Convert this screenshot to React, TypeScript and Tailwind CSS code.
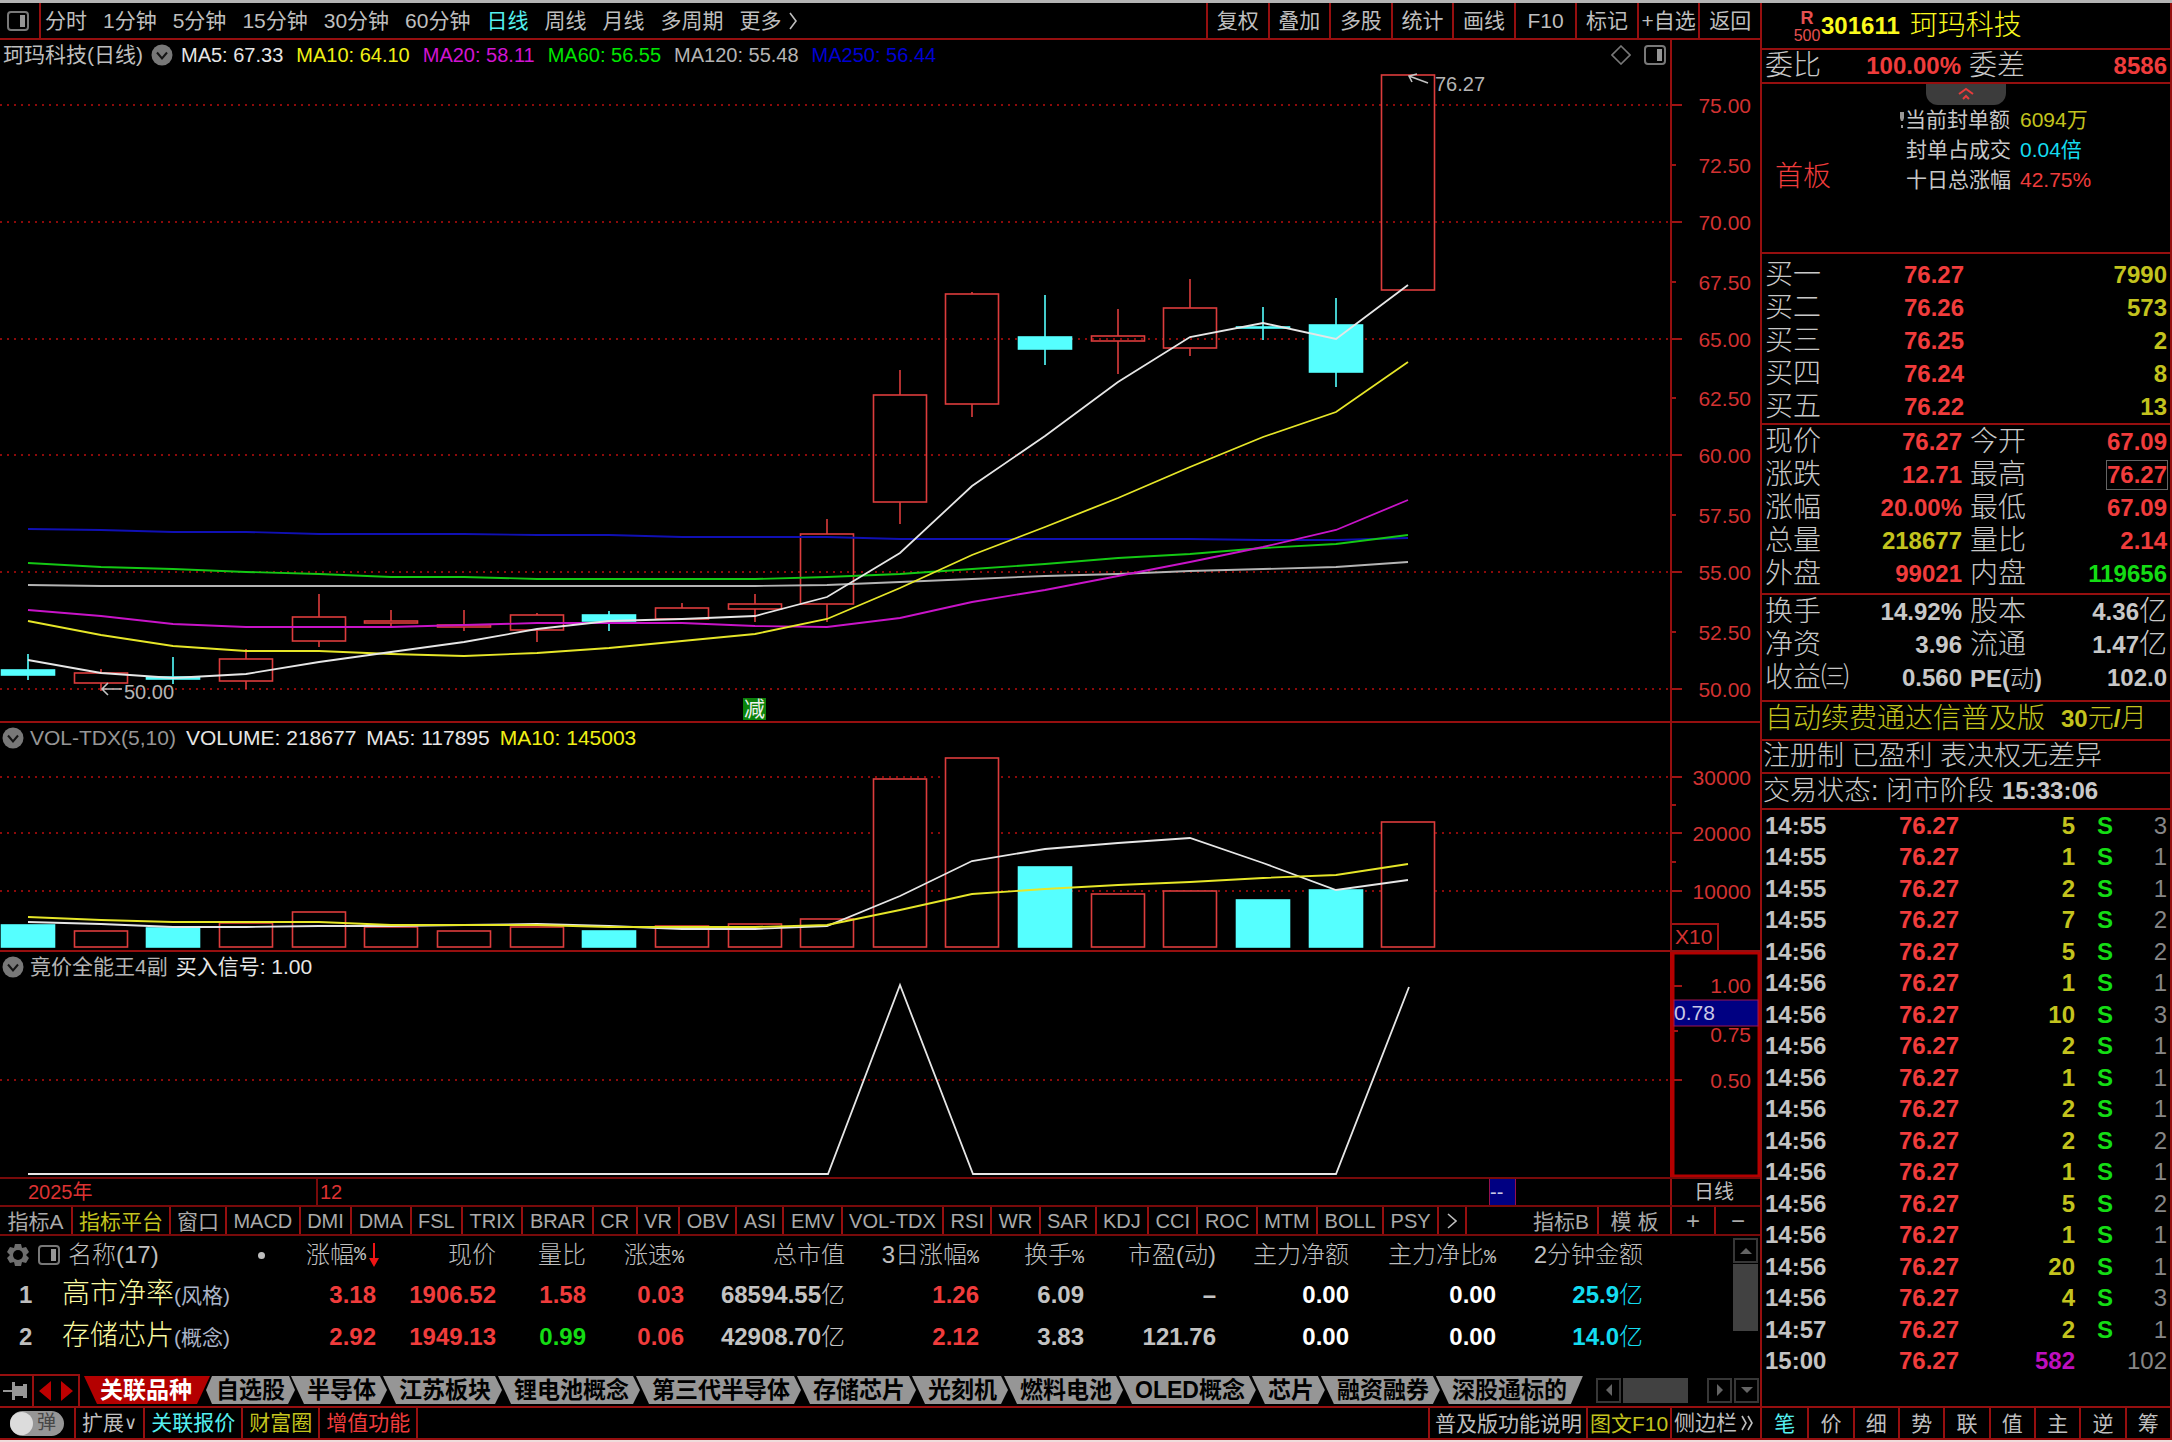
import React, { useState } from "react";
import clsx from "clsx";

const periods = [
  "分时",
  "1分钟",
  "5分钟",
  "15分钟",
  "30分钟",
  "60分钟",
  "日线",
  "周线",
  "月线",
  "多周期",
];

const tools = ["复权", "叠加", "多股", "统计", "画线", "F10", "标记", "+自选", "返回"];

const maLegend = [
  { text: "MA5: 67.33", color: "text-[#e6e6e6]" },
  { text: "MA10: 64.10", color: "text-[#f0f014]" },
  { text: "MA20: 58.11", color: "text-[#d214d2]" },
  { text: "MA60: 56.55", color: "text-[#00e600]" },
  { text: "MA120: 55.48", color: "text-[#b4b4b4]" },
  { text: "MA250: 56.44", color: "text-[#0000d2]" },
];

const indicators = [
  "MACD",
  "DMI",
  "DMA",
  "FSL",
  "TRIX",
  "BRAR",
  "CR",
  "VR",
  "OBV",
  "ASI",
  "EMV",
  "VOL-TDX",
  "RSI",
  "WR",
  "SAR",
  "KDJ",
  "CCI",
  "ROC",
  "MTM",
  "BOLL",
  "PSY",
];

const sectors = [
  "半导体",
  "江苏板块",
  "锂电池概念",
  "第三代半导体",
  "存储芯片",
  "光刻机",
  "燃料电池",
  "OLED概念",
  "芯片",
  "融资融券",
];

const sideTabs = ["笔", "价", "细", "势", "联", "值", "主", "逆", "筹"];

// x position of each trading day
const dayX = (i: number) => Math.round(28 + 72.65 * i);

type Candle = {
  top: number;
  bottom: number;
  high: number;
  low: number;
  vol: number;
  down?: boolean;
};

const candles: Candle[] = [
  { top: 670, bottom: 675, high: 654, low: 680, vol: 925, down: true },
  { top: 673, bottom: 683, high: 669, low: 691, vol: 931 },
  { top: 677, bottom: 679, high: 657, low: 684, vol: 928, down: true },
  { top: 659, bottom: 681, high: 649, low: 689, vol: 923 },
  { top: 617, bottom: 641, high: 594, low: 647, vol: 912 },
  { top: 621, bottom: 623, high: 610, low: 626, vol: 927 },
  { top: 625, bottom: 627, high: 610, low: 631, vol: 931 },
  { top: 615, bottom: 630, high: 613, low: 642, vol: 927 },
  { top: 615, bottom: 621, high: 611, low: 631, vol: 931, down: true },
  { top: 608, bottom: 619, high: 603, low: 619, vol: 926 },
  { top: 604, bottom: 609, high: 594, low: 622, vol: 924 },
  { top: 534, bottom: 604, high: 519, low: 622, vol: 919 },
  { top: 395, bottom: 502, high: 370, low: 524, vol: 779 },
  { top: 294, bottom: 404, high: 292, low: 417, vol: 758 },
  { top: 337, bottom: 349, high: 295, low: 365, vol: 867, down: true },
  { top: 336, bottom: 341, high: 309, low: 374, vol: 894 },
  { top: 308, bottom: 348, high: 279, low: 356, vol: 891 },
  { top: 327, bottom: 328, high: 307, low: 340, vol: 900, down: true },
  { top: 325, bottom: 372, high: 298, low: 387, vol: 890, down: true },
  { top: 75, bottom: 290, high: 75, low: 290, vol: 822 },
];

const priceLines = [
  {
    color: "#1010b4",
    ys: [529, 530, 532, 532, 534, 534, 534, 535, 535, 537, 537, 537, 539, 539, 539, 539, 539, 540, 540, 538],
  },
  {
    color: "#b4b4b4",
    ys: [585, 586, 586, 586, 586, 586, 586, 586, 586, 586, 586, 585, 582, 579, 576, 574, 571, 569, 567, 562],
  },
  {
    color: "#14c814",
    ys: [563, 567, 569, 572, 574, 577, 577, 579, 579, 579, 579, 577, 574, 569, 564, 558, 554, 548, 544, 535],
  },
  {
    color: "#c814c8",
    ys: [610, 616, 624, 627, 627, 627, 625, 623, 623, 623, 626, 627, 618, 602, 590, 576, 562, 547, 530, 500],
  },
  {
    color: "#e6e628",
    ys: [621, 635, 646, 651, 651, 654, 656, 653, 648, 641, 634, 619, 588, 555, 527, 498, 467, 437, 412, 362],
  },
  {
    color: "#e6e6e6",
    ys: [660, 673, 678, 674, 662, 652, 642, 629, 621, 619, 616, 597, 553, 486, 436, 382, 337, 323, 339, 285],
  },
];

const volumeLines = [
  {
    color: "#e6e6e6",
    ys: [922, 924, 927, 927, 926, 926, 925, 924, 926, 929, 929, 926, 896, 861, 849, 843, 838, 863, 890, 880],
  },
  {
    color: "#e6e628",
    ys: [917, 920, 922, 922, 922, 925, 925, 925, 927, 927, 927, 925, 910, 894, 889, 885, 882, 878, 875, 864],
  },
];

const toPoints = (ys: number[]) => ys.map((y, i) => `${dayX(i)},${y}`).join(" ");

const priceAxis = [
  { label: "75.00", y: 105 },
  { label: "72.50", y: 165, minor: true },
  { label: "70.00", y: 222 },
  { label: "67.50", y: 282, minor: true },
  { label: "65.00", y: 339 },
  { label: "62.50", y: 398, minor: true },
  { label: "60.00", y: 455 },
  { label: "57.50", y: 515, minor: true },
  { label: "55.00", y: 572 },
  { label: "52.50", y: 632, minor: true },
  { label: "50.00", y: 689 },
];

const volumeAxis = [
  { label: "30000", y: 777 },
  { label: "20000", y: 833 },
  { label: "10000", y: 891 },
];

const bids = [
  ["买一", "76.27", "7990"],
  ["买二", "76.26", "573"],
  ["买三", "76.25", "2"],
  ["买四", "76.24", "8"],
  ["买五", "76.22", "13"],
];

const red = "text-[#f03c3c]";
const yellow = "text-[#c3c31e]";
const gray = "text-[#c3c3c3]";
const green = "text-[#14dc14]";

const quotes = [
  ["现价", "76.27", red, "今开", "67.09", red],
  ["涨跌", "12.71", red, "最高", "76.27", red],
  ["涨幅", "20.00%", red, "最低", "67.09", red],
  ["总量", "218677", yellow, "量比", "2.14", red],
  ["外盘", "99021", red, "内盘", "119656", green],
];

const finance = [
  ["换手", "14.92%", "股本", "4.36", "亿"],
  ["净资", "3.96", "流通", "1.47", "亿"],
  ["收益㈢", "0.560", "PE(动)", "102.0", ""],
];

const trades = [
  ["14:55", "5", "S", "3"],
  ["14:55", "1", "S", "1"],
  ["14:55", "2", "S", "1"],
  ["14:55", "7", "S", "2"],
  ["14:56", "5", "S", "2"],
  ["14:56", "1", "S", "1"],
  ["14:56", "10", "S", "3"],
  ["14:56", "2", "S", "1"],
  ["14:56", "1", "S", "1"],
  ["14:56", "2", "S", "1"],
  ["14:56", "2", "S", "2"],
  ["14:56", "1", "S", "1"],
  ["14:56", "5", "S", "2"],
  ["14:56", "1", "S", "1"],
  ["14:56", "20", "S", "1"],
  ["14:56", "4", "S", "3"],
  ["14:57", "2", "S", "1"],
  ["15:00", "582", "", "102"],
];

const columns = [
  { name: "现价", width: "w-[120px]" },
  { name: "量比", width: "w-[90px]" },
  { name: "涨速", percent: true, width: "w-[98px]" },
  { name: "总市值", width: "w-[161px]" },
  { name: "3日涨幅", percent: true, width: "w-[134px]" },
  { name: "换手", percent: true, width: "w-[105px]" },
  { name: "市盈(动)", width: "w-[132px]" },
  { name: "主力净额", width: "w-[133px]" },
  { name: "主力净比", percent: true, width: "w-[147px]" },
  { name: "2分钟金额", width: "w-[147px]" },
];

const boards = [
  {
    name: "高市净率",
    kind: "(风格)",
    cells: ["3.18", "1906.52", "1.58", "0.03", "68594.55", "1.26", "6.09", "–", "0.00", "0.00", "25.9"],
  },
  {
    name: "存储芯片",
    kind: "(概念)",
    cells: ["2.92", "1949.13", "0.99", "0.06", "42908.70", "2.12", "3.83", "121.76", "0.00", "0.00", "14.0"],
  },
];

const cellColor = (row: number, col: number) => {
  if (row === 1 && col === 2) return green;
  if (col <= 3 || col === 5) return red;
  if (col === 8 || col === 9) return "text-white";
  if (col === 10) return "text-[#14dcf0]";
  return gray;
};

const PanelIcon = ({ className }: { className?: string }) => (
  <svg viewBox="0 0 22 20" className={clsx("h-5 w-[22px] shrink-0", className)} fill="none">
    <rect x="1" y="1" width="20" height="18" rx="3" stroke="#787878" strokeWidth="2" />
    <rect x="13" y="4" width="5" height="12" fill="#969696" />
  </svg>
);

const DropIcon = () => (
  <svg viewBox="0 0 22 22" className="size-[22px] shrink-0">
    <circle cx="11" cy="11" r="10.5" fill="#787878" />
    <path d="M6 8.5l5 6 5-6" fill="none" stroke="#141414" strokeWidth="2" />
  </svg>
);

const ArrowButton = ({ d, label }: { d: string; label: string }) => (
  <button
    type="button"
    aria-label={label}
    className="flex size-[25px] shrink-0 items-center justify-center border-2 border-[#373737] cursor-pointer"
  >
    <svg viewBox="0 0 14 14" className="size-[14px]">
      <path d={d} fill="#646464" />
    </svg>
  </button>
);

const GridLines = ({ ys }: { ys: number[] }) => (
  <g stroke="#8c0a0a" strokeWidth="2" strokeDasharray="2 5">
    {ys.map((y) => (
      <line key={y} x1="0" x2="1670" y1={y} y2={y} />
    ))}
  </g>
);

const PriceChart = () => (
  <svg
    viewBox="0 70 1670 651"
    preserveAspectRatio="xMinYMin meet"
    className="block h-[651px] w-full font-['Liberation_Sans','Noto_Sans_CJK_SC',sans-serif]"
  >
    <GridLines ys={priceAxis.filter((t) => !t.minor).map((t) => t.y)} />
    {candles.map((c, i) => {
      const x = dayX(i);
      const color = c.down ? "#55ffff" : "#dc3c3c";
      return (
        <g key={i} stroke={color} strokeWidth="1.6">
          <line x1={x} x2={x} y1={c.high} y2={c.top} />
          <line x1={x} x2={x} y1={c.bottom} y2={c.low} />
          <rect
            x={x - 26.5}
            y={c.top}
            width="53"
            height={c.bottom - c.top}
            fill={c.down ? color : "none"}
          />
        </g>
      );
    })}
    {priceLines.map((l) => (
      <polyline key={l.color} points={toPoints(l.ys)} fill="none" stroke={l.color} strokeWidth="1.8" />
    ))}
    <path d="M122 689h-20m6-6l-6 6 6 6" fill="none" stroke="#c3c3c3" strokeWidth="1.6" />
    <text x="124" y="699" fontSize="20" fill="#b4b4b4">
      50.00
    </text>
    <path d="M1428 83l-19-7m8-2l-8 2 3 6" fill="none" stroke="#c3c3c3" strokeWidth="1.6" />
    <text x="1435" y="91" fontSize="20" fill="#b4b4b4">
      76.27
    </text>
    <rect x="743" y="698" width="23" height="22" fill="#0a820a" />
    <text x="744" y="716" fontSize="21" fill="#f0f0f0">
      减
    </text>
  </svg>
);

const PriceScale = () => (
  <svg
    viewBox="1672 40 88 681"
    className="block h-full w-full font-['Liberation_Sans',sans-serif]"
    fontSize="21"
    fill="#d23232"
  >
    {priceAxis.map((t) => (
      <g key={t.label}>
        <line x1="1672" x2={t.minor ? 1676 : 1682} y1={t.y} y2={t.y} stroke="#a01414" strokeWidth="2" />
        <text x="1751" y={t.y + 8} textAnchor="end">
          {t.label}
        </text>
      </g>
    ))}
  </svg>
);

const VolumeChart = () => (
  <svg viewBox="0 753 1670 197" preserveAspectRatio="xMinYMin meet" className="block h-[197px] w-full">
    <GridLines ys={volumeAxis.map((t) => t.y)} />
    {candles.map((c, i) => (
      <rect
        key={i}
        x={dayX(i) - 26.5}
        y={c.vol}
        width="53"
        height={947 - c.vol}
        fill={c.down ? "#55ffff" : "#000"}
        stroke={c.down ? "#55ffff" : "#dc3c3c"}
        strokeWidth="1.6"
      />
    ))}
    {volumeLines.map((l) => (
      <polyline key={l.color} points={toPoints(l.ys)} fill="none" stroke={l.color} strokeWidth="1.8" />
    ))}
  </svg>
);

const VolumeScale = () => (
  <svg
    viewBox="1672 723 88 227"
    className="block h-full w-full font-['Liberation_Sans',sans-serif]"
    fontSize="21"
    fill="#d23232"
  >
    {volumeAxis.map((t) => (
      <g key={t.label}>
        <line x1="1672" x2="1682" y1={t.y} y2={t.y} stroke="#a01414" strokeWidth="2" />
        <text x="1751" y={t.y + 8} textAnchor="end">
          {t.label}
        </text>
      </g>
    ))}
    <path d="M1672 805h4m-4 57h4" stroke="#a01414" strokeWidth="2" />
    <path d="M1672 924h46v27" fill="none" stroke="#a01414" strokeWidth="2" />
    <text x="1675" y="944">
      X10
    </text>
  </svg>
);

const SignalChart = () => (
  <svg viewBox="0 982 1670 195" preserveAspectRatio="xMinYMin meet" className="block h-[195px] w-full">
    <GridLines ys={[1080]} />
    <polyline
      points="28,1174 828,1174 900,985 973,1174 1336,1174 1409,987"
      fill="none"
      stroke="#e6e6e6"
      strokeWidth="1.8"
    />
  </svg>
);

const SignalScale = () => (
  <svg
    viewBox="1672 952 88 225"
    className="block h-full w-full font-['Liberation_Sans',sans-serif]"
    fontSize="21"
    fill="#d23232"
  >
    <rect x="1673" y="953" width="86" height="223" fill="none" stroke="#b40000" strokeWidth="3" />
    <path d="M1674 986h8m-8 94h8m-8-49h4" stroke="#a01414" strokeWidth="2" />
    <text x="1751" y="993" textAnchor="end">
      1.00
    </text>
    <text x="1751" y="1042" textAnchor="end">
      0.75
    </text>
    <text x="1751" y="1088" textAnchor="end">
      0.50
    </text>
    <rect x="1674" y="1000" width="84" height="26" fill="#000082" stroke="#a01450" strokeWidth="1" />
    <text x="1674" y="1020" fill="#c8c8e6">
      0.78
    </text>
  </svg>
);

const StockPanel = () => (
  <aside className="flex w-[412px] shrink-0 flex-col border-x-2 border-[#960f0f] text-[28px] font-light text-[#c8c8c8]">
    <h1 className="flex h-[45px] items-center pl-[31px] text-[#fafa1e]">
      <span className="flex w-7 flex-col items-center text-base leading-4 text-[#e65050]">
        <span className="text-lg leading-5 font-bold">R</span>
        500
      </span>
      <span className="text-2xl font-bold">301611</span>
      <span className="ml-[10px]">珂玛科技</span>
    </h1>
    <div className="flex h-[36px] items-center border-y-2 border-[#960f0f] px-[3px]">
      <span>委比</span>
      <span className="flex-1 text-right text-2xl font-bold text-[#f03c3c]">100.00%</span>
      <span className="ml-2">委差</span>
      <span className="w-[142px] text-right text-2xl font-bold text-[#f03c3c]">8586</span>
    </div>
    <div className="flex h-[168px] flex-col items-center">
      <button
        type="button"
        aria-label="收起"
        className="flex h-[21px] w-20 justify-center rounded-b-xl bg-[#3c3c3c] pt-[3px] cursor-pointer"
      >
        <svg viewBox="0 0 16 14" className="h-[14px] w-4" fill="none" stroke="#e63c3c" strokeWidth="2">
          <path d="M1 7l7-5 7 5M5 12l3-3 3 3" />
        </svg>
      </button>
      <div className="flex w-full items-end pl-[13px]">
        <span className="leading-[36px] text-[#f03c3c]">首板</span>
        <dl className="ml-auto grid grid-cols-[104px_150px] gap-x-[10px] text-[21px] leading-[30px] font-normal">
          <dt className="flex items-center justify-end whitespace-nowrap">
            <svg viewBox="0 0 6 18" className="h-[18px] w-[6px] shrink-0" fill="#969696">
              <path d="M1 1h4v6l-1 3H2L1 7zM2 14h2v3H2z" />
            </svg>
            当前封单额
          </dt>
          <dd className="text-[#c3c31e]">6094万</dd>
          <dt className="whitespace-nowrap">封单占成交</dt>
          <dd className="text-[#14dcf0]">0.04倍</dd>
          <dt className="whitespace-nowrap">十日总涨幅</dt>
          <dd className="text-[#f03c3c]">42.75%</dd>
        </dl>
      </div>
    </div>
    <div className="border-t-2 border-[#960f0f] pt-1">
      <table className="w-full table-fixed">
        <tbody>
          {bids.map(([name, price, volume]) => (
            <tr key={name} className="h-[33px] leading-[33px]">
              <th scope="row" className="pl-[3px] text-left font-light">
                {name}
              </th>
              <td className="w-[112px] text-right text-2xl leading-[33px] font-bold text-[#f03c3c]">{price}</td>
              <td className="w-[206px] pr-[3px] text-right text-2xl leading-[33px] font-bold text-[#c3c31e]">
                {volume}
              </td>
            </tr>
          ))}
        </tbody>
      </table>
    </div>
    <div className="border-t-2 border-[#960f0f] px-[3px] pb-[3px]">
      {quotes.map(([name, value, color, name2, value2, color2]) => (
        <div key={name} className="flex h-[33px] items-center">
          <span>{name}</span>
          <span className={clsx("flex-1 text-right text-2xl font-bold", color)}>{value}</span>
          <span className="ml-2 w-[90px]">{name2}</span>
          <span className={clsx("flex w-[107px] justify-end text-2xl leading-7 font-bold", color2)}>
            <span className={clsx(name2 === "最高" && "outline outline-[#646464]")}>{value2}</span>
          </span>
        </div>
      ))}
    </div>
    <div className="border-t-2 border-[#960f0f] px-[3px] pb-[6px]">
      {finance.map(([name, value, name2, value2, unit]) => (
        <div key={name} className="flex h-[33px] items-center">
          <span>{name}</span>
          <span className="flex-1 text-right text-2xl font-bold">{value}</span>
          <span className="ml-2 w-[90px]">
            {unit ? (
              name2
            ) : (
              <span className="text-2xl font-bold whitespace-nowrap">
                PE(<span className="font-light">动</span>)
              </span>
            )}
          </span>
          <span className="flex w-[107px] items-center justify-end">
            <span className="text-2xl font-bold">{value2}</span>
            {unit}
          </span>
        </div>
      ))}
    </div>
    <a
      href="#renew"
      className="flex h-[39px] items-center gap-4 border-t-2 border-[#960f0f] px-[3px] pb-1 whitespace-nowrap text-[#c3c31e]"
    >
      <span>自动续费通达信普及版</span>
      <span className="text-[26px]">
        <span className="text-2xl font-bold">30</span>元<span className="text-2xl font-bold">/</span>月
      </span>
    </a>
    <p className="flex h-[33px] items-center border-t-2 border-[#960f0f] px-px text-[27px] whitespace-nowrap">
      注册制 已盈利 表决权无差异
    </p>
    <p className="flex h-[36px] items-center gap-2 border-t-2 border-[#960f0f] px-px text-[27px] whitespace-nowrap">
      交易状态: 闭市阶段 <span className="text-2xl font-bold">15:33:06</span>
    </p>
    <div className="flex-1 border-t-2 border-[#960f0f]">
      <table className="h-[567px] w-full table-fixed text-2xl leading-7 font-bold">
        <tbody>
          {trades.map(([time, volume, side, count], i) => (
            <tr key={i}>
              <td className="pl-[3px] text-[#c3c3c3]">{time}</td>
              <td className="w-[106px] text-right text-[#f03c3c]">76.27</td>
              <td className={clsx("w-[116px] text-right", side ? yellow : "text-[#be0fbe]")}>{volume}</td>
              <td className="w-[60px] text-center text-[#14dc14]">{side}</td>
              <td className="w-[35px] text-[#878787]">
                <span className="flex justify-end pr-[3px] font-normal">{count}</span>
              </td>
            </tr>
          ))}
        </tbody>
      </table>
    </div>
  </aside>
);

const BoardTable = () => (
  <section className="flex h-[140px] border-t-2 border-[#780a0a]">
    <div className="flex-1">
      <table className="table-fixed text-2xl text-[#bebebe]">
        <thead>
          <tr className="h-[38px] whitespace-nowrap">
            <th className="w-[254px] font-light" colSpan={2}>
              <span className="flex items-center gap-2 pl-[6px]">
                <svg viewBox="0 0 24 24" className="size-6 shrink-0">
                  <path
                    d="M9 1h6l1 4 4-1 3 5-3 3 3 3-3 5-4-1-1 4H9l-1-4-4 1-3-5 3-3-3-3 3-5 4 1z"
                    fill="#6e6e6e"
                  />
                  <circle cx="12" cy="12" r="5" fill="#000" />
                </svg>
                <PanelIcon />
                名称(17)
              </span>
            </th>
            <th className="w-[122px] font-light">
              <span className="flex items-center">
                <i className="ml-1 size-[7px] rounded-full bg-[#bebebe]" />
                <span className="ml-auto">涨幅</span>
                <span className="font-['Liberation_Mono',monospace] text-xl">%</span>
                <svg viewBox="0 0 12 26" className="-mr-1 ml-[2px] h-[26px] w-3" fill="#f01414">
                  <path d="M5 1h2v15h4l-5 9-5-9h4z" />
                </svg>
              </span>
            </th>
            {columns.map((c) => (
              <th key={c.name} className={clsx("text-right font-light", c.width)}>
                {c.name}
                {c.percent && <span className="font-['Liberation_Mono',monospace] text-xl">%</span>}
              </th>
            ))}
          </tr>
        </thead>
        <tbody>
          {boards.map((b, row) => (
            <tr key={b.name} className="h-[40px] leading-[40px]">
              <td className="w-[60px] pl-[19px] font-bold">{row + 1}</td>
              <td className="w-[194px] pl-[2px] whitespace-nowrap">
                <span className="text-[28px] font-light text-[#fafaa0]">{b.name}</span>
                <span className="text-[21px] text-[#aab4c8]">{b.kind}</span>
              </td>
              {b.cells.map((v, col) => (
                <td
                  key={col}
                  className={clsx(
                    "text-right whitespace-nowrap",
                    cellColor(row, col),
                    "font-bold",
                  )}
                >
                  {v}
                  {(col === 4 || col === 10) && <span className="font-light">亿</span>}
                </td>
              ))}
            </tr>
          ))}
        </tbody>
      </table>
    </div>
    <div className="flex w-[27px] flex-col gap-px pt-[2px]">
      <ArrowButton d="M1 10l6-6 6 6z" label="向上" />
      <div className="h-[67px] w-[25px] bg-[#414141]" />
    </div>
  </section>
);

const SectorTabs = ({ active, onSelect }: { active: string; onSelect: (s: string) => void }) => {
  const shade = (name: string) =>
    active === name ? "bg-[#b40000] text-white" : "bg-[#969696] text-black";
  return (
    <div className="flex h-[32px] items-center text-[23px] leading-7 font-bold whitespace-nowrap">
      <button
        type="button"
        aria-label="固定"
        className="flex h-full w-[34px] items-center justify-center border-t-2 border-r-2 border-[#960f0f]"
      >
        <svg viewBox="0 0 26 20" className="h-5 w-[26px]" fill="#969696">
          <path d="M0 9h9v2H0zM9 1h3v4h8V3h4v14h-4v-2h-8v4H9z" />
        </svg>
      </button>
      <button
        type="button"
        aria-label="切换"
        className="flex h-full w-[46px] items-center justify-center border-t-2 border-r-2 border-[#960f0f]"
      >
        <svg viewBox="0 0 36 22" className="h-[22px] w-9" fill="#be0000">
          <path d="M13 1v20L1 11zM23 1v20l12-10z" />
        </svg>
      </button>
      <button
        type="button"
        onClick={() => onSelect("关联品种")}
        className={clsx(
          "ml-1 h-7 pr-[18px] pl-4 [clip-path:polygon(0_0,100%_0,calc(100%-13px)_100%,13px_100%)]",
          shade("关联品种"),
        )}
      >
        关联品种
      </button>
      <button
        type="button"
        onClick={() => onSelect("自选股")}
        className={clsx(
          "-ml-1 h-7 px-[10px] [clip-path:polygon(6px_0,calc(100%-6px)_0,100%_50%,calc(100%-7px)_100%,6px_100%,0_50%)]",
          shade("自选股"),
        )}
      >
        自选股
      </button>
      {sectors.map((s) => (
        <button
          key={s}
          type="button"
          onClick={() => onSelect(s)}
          className={clsx(
            "-ml-1 h-7 pr-[11px] pl-4 [clip-path:polygon(0_0,calc(100%-7px)_0,100%_50%,calc(100%-7px)_100%,13px_100%)]",
            shade(s),
          )}
        >
          {s}
        </button>
      ))}
      <button
        type="button"
        onClick={() => onSelect("深股通标的")}
        className={clsx(
          "-ml-1 h-7 px-4 [clip-path:polygon(0_0,100%_0,calc(100%-12px)_100%,13px_100%)]",
          shade("深股通标的"),
        )}
      >
        深股通标的
      </button>
      <div className="ml-auto flex w-[164px] gap-[2px] pr-px">
        <ArrowButton d="M10 1L4 7l6 6z" label="向左" />
        <div className="h-[25px] w-[65px] bg-[#414141]" />
        <div className="flex-1" />
        <ArrowButton d="M4 1l6 6-6 6z" label="向右" />
        <ArrowButton d="M1 4l6 6 6-6z" label="向下" />
      </div>
    </div>
  );
};

const Footer = () => {
  const [popup, setPopup] = useState(false);
  const cell = "flex items-center border-r-2 border-[#960f0f] px-[6px] cursor-pointer";
  return (
    <footer className="flex h-[34px] border-y-2 border-[#960f0f] text-[21px] whitespace-nowrap text-[#bebebe]">
      <label className="flex w-[76px] items-center border-r-2 border-[#960f0f] pl-[10px]">
        <input
          type="checkbox"
          checked={popup}
          onChange={(e) => setPopup(e.target.checked)}
          className="peer sr-only"
        />
        <span className="flex h-[25px] w-[54px] items-center gap-1 rounded-full bg-[#969696] text-[19px] leading-6 text-[#464646]">
          <i className="h-[23px] w-[23px] rounded-full bg-[#dcdcdc]" />弹
        </span>
      </label>
      <button type="button" className={cell}>
        扩展<span className="font-['DejaVu_Sans',sans-serif] text-lg">∨</span>
      </button>
      <button type="button" className={clsx(cell, "text-[#55f0f0]")}>
        关联报价
      </button>
      <button type="button" className={clsx(cell, "text-[#c3c31e]")}>
        财富圈
      </button>
      <button type="button" className={clsx(cell, "text-[#f03c3c]")}>
        增值功能
      </button>
      <button type="button" className="ml-auto border-l-2 border-[#960f0f] pr-1 pl-[5px]">
        普及版功能说明
      </button>
      <button type="button" className="w-[86px] border-x-2 border-[#960f0f] text-[#c3c31e]">
        图文F10
      </button>
      <button type="button" className="flex w-[88px] items-center gap-1 pl-[2px]">
        侧边栏
        <svg viewBox="0 0 12 16" className="h-4 w-3" fill="none" stroke="#bebebe" strokeWidth="1.6">
          <path d="M1 1l4 7-4 7M7 1l4 7-4 7" />
        </svg>
      </button>
      <div className="grid w-[412px] grid-cols-9 border-x-2 border-[#960f0f]">
        {sideTabs.map((t, i) => (
          <button
            key={t}
            type="button"
            className={clsx(
              "border-[#960f0f] cursor-pointer",
              i > 0 && "border-l-2",
              i === 0 && "text-[#55f0f0]",
            )}
          >
            {t}
          </button>
        ))}
      </div>
    </footer>
  );
};

const App = () => {
  const [period, setPeriod] = useState("日线");
  const [sector, setSector] = useState("关联品种");

  return (
    <div className="flex min-h-screen flex-col border-t-[3px] border-b-2 border-t-[#b4b4b4] border-b-[#f0dcdc] bg-black font-['Liberation_Sans','Noto_Sans_CJK_SC',sans-serif]">
      <main className="flex flex-1">
        <div className="flex min-w-0 flex-1 flex-col">
          {/* 周期工具栏 */}
          <nav className="flex h-[37px] items-stretch border-b-2 border-[#960f0f] text-[21px] whitespace-nowrap text-[#bebebe]">
            <span className="flex w-[41px] items-center border-r-2 border-[#960f0f] pl-[7px]">
              <PanelIcon />
            </span>
            <div className="flex flex-1 items-center gap-4 pl-1">
              {periods.map((p) => (
                <button
                  key={p}
                  type="button"
                  onClick={() => setPeriod(p)}
                  className={clsx("cursor-pointer", p === period && "text-[#55f0f0]")}
                >
                  {p}
                </button>
              ))}
              <button type="button" className="flex items-center gap-2 cursor-pointer">
                更多
                <svg viewBox="0 0 8 18" className="h-[18px] w-2" fill="none" stroke="#bebebe" strokeWidth="1.6">
                  <path d="M1 1l6 8-6 8" />
                </svg>
              </button>
            </div>
            <div className="grid w-[554px] grid-cols-9">
              {tools.map((t) => (
                <button key={t} type="button" className="border-l-2 border-[#960f0f] cursor-pointer">
                  {t}
                </button>
              ))}
            </div>
          </nav>

          {/* K线主图 */}
          <section className="flex border-b-2 border-[#960f0f]">
            <div className="min-w-0 flex-1">
              <div className="flex h-[30px] items-center gap-[13px] pl-[3px] text-xl whitespace-nowrap">
                <span className="flex items-center gap-2">
                  <span className="text-[21px] text-[#bebebe]">珂玛科技(日线)</span>
                  <DropIcon />
                  <span className={maLegend[0].color}>{maLegend[0].text}</span>
                </span>
                {maLegend.slice(1).map((m) => (
                  <span key={m.text} className={m.color}>
                    {m.text}
                  </span>
                ))}
                <svg viewBox="0 0 20 20" className="ml-auto size-5" fill="none" stroke="#787878">
                  <path d="M10 1l9 9-9 9-9-9z" strokeWidth="1.6" />
                </svg>
                <PanelIcon className="mr-1" />
              </div>
              <PriceChart />
            </div>
            <div className="h-[681px] w-[90px] border-l-2 border-[#960f0f]">
              <PriceScale />
            </div>
          </section>

          {/* 成交量 */}
          <section className="flex border-b-2 border-[#960f0f]">
            <div className="min-w-0 flex-1">
              <div className="flex h-[30px] items-center gap-[10px] pl-[2px] text-[21px] whitespace-nowrap text-[#e6e6e6]">
                <span className="flex items-center gap-[6px] text-[#969696]">
                  <DropIcon />
                  VOL-TDX(5,10)
                </span>
                <span>VOLUME: 218677</span>
                <span>MA5: 117895</span>
                <span className="text-[#f0f014]">MA10: 145003</span>
              </div>
              <VolumeChart />
            </div>
            <div className="h-[227px] w-[90px] border-l-2 border-[#960f0f]">
              <VolumeScale />
            </div>
          </section>

          {/* 副图指标 */}
          <section className="flex border-b-2 border-[#780a0a]">
            <div className="min-w-0 flex-1">
              <div className="flex h-[30px] items-center gap-2 pl-[2px] text-[21px] whitespace-nowrap text-[#e6e6e6]">
                <span className="flex items-center gap-[6px] text-[#b4b4b4]">
                  <DropIcon />
                  竟价全能王4副
                </span>
                <span>买入信号: 1.00</span>
              </div>
              <SignalChart />
            </div>
            <div className="h-[225px] w-[90px] border-l-2 border-[#b40000]">
              <SignalScale />
            </div>
          </section>

          <div className="flex h-[26px] items-stretch text-xl leading-[26px] text-[#dc3232]">
            <span className="w-[318px] border-r-2 border-[#780a0a] pl-7">2025年</span>
            <span className="flex-1 pl-[2px]">12</span>
            <span className="mr-[154px] w-[27px] border-x border-[#960f50] bg-[#000082] text-[#c8c8e6]">--</span>
            <span className="w-[90px] border-l-2 border-[#960f0f] pl-[22px] text-[#bebebe]">日线</span>
          </div>

          {/* 指标切换 */}
          <div className="flex h-[29px] items-stretch border-t-2 border-[#780a0a] text-xl whitespace-nowrap text-[#aaaaaa]">
            <button type="button" className="w-[73px] border-r-2 border-[#960f0f] text-[21px]">
              指标A
            </button>
            <button type="button" className="w-[98px] border-r-2 border-[#960f0f] text-[21px] text-[#c3c31e]">
              指标平台
            </button>
            <button type="button" className="w-[56px] border-r-2 border-[#960f0f] text-[21px]">
              窗口
            </button>
            <div className="flex w-[1212px]">
              {indicators.map((name) => (
                <button
                  key={name}
                  type="button"
                  className="flex-auto border-r-2 border-[#960f0f] cursor-pointer"
                >
                  {name}
                </button>
              ))}
            </div>
            <button
              type="button"
              aria-label="更多指标"
              className="flex w-[28px] items-center justify-center border-r-2 border-[#960f0f]"
            >
              <svg viewBox="0 0 10 16" className="h-4 w-[10px]" fill="none" stroke="#bebebe" strokeWidth="1.6">
                <path d="M1 1l8 7-8 7" />
              </svg>
            </button>
            <button type="button" className="ml-auto border-r-2 border-[#960f0f] pr-2 text-[21px]">
              指标B
            </button>
            <button type="button" className="w-[71px] text-[21px]">
              模 板
            </button>
            <button type="button" className="w-[46px] border-x-2 border-[#960f0f] text-2xl leading-6">
              +
            </button>
            <button type="button" className="w-[44px] text-2xl leading-6">
              −
            </button>
          </div>

          <BoardTable />
          <SectorTabs active={sector} onSelect={setSector} />
        </div>
        <StockPanel />
      </main>
      <Footer />
    </div>
  );
};

export default App;
